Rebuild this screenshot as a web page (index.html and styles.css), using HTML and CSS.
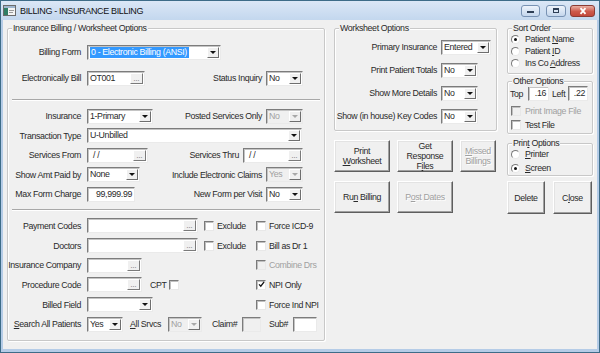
FILE: index.html
```html
<!DOCTYPE html>
<html lang="en">
<head>
    <meta charset="UTF-8">
    <title>BILLING - INSURANCE BILLING</title>
    <link rel="stylesheet" href="styles.css">
</head>
<body>
<div class="window">
    <!-- Title bar -->
    <div class="titlebar">
        <svg class="app-icon" viewBox="0 0 13 11">
            <rect x="0.5" y="0.5" width="12" height="10" fill="#f4f4f4" stroke="#6b6b6b"/>
            <rect x="1" y="1" width="11" height="2" fill="#9fb6cf"/>
            <rect x="1" y="3" width="4" height="7" fill="#2f7d64"/>
            <rect x="6" y="5" width="5" height="1" fill="#9a9a9a"/>
            <rect x="6" y="7" width="4" height="1" fill="#9a9a9a"/>
        </svg>
        <span class="title">BILLING - INSURANCE BILLING</span>
        <div class="win-btns">
            <span class="wb wb-min"><i></i></span>
            <span class="wb wb-max"><i></i></span>
            <span class="wb wb-close">
                <svg viewBox="0 0 10 8"><path d="M2.5 1.2l5 5.6M7.5 1.2l-5 5.6" stroke="#fff" stroke-width="1.8" fill="none"/></svg>
            </span>
        </div>
    </div>

    <div class="client">
        <!-- Insurance Billing / Worksheet Options -->
        <div class="group billing">
            <span class="legend">Insurance Billing / Worksheet Options</span>
            <div class="row">
                <span class="lbl">Billing Form</span>
                <div class="sel sel-form"><span class="val"><span class="hl">0 - Electronic Billing (ANSI)</span></span><i class="dd"></i></div>
            </div>
            <div class="row r-elec">
                <span class="lbl">Electronically Bill</span>
                <div class="tb tb-ebill"><span class="val">OT001</span><i class="el">...</i></div>
                <span class="rlbl">Status Inquiry</span>
                <div class="sel sel-yn"><span class="val">No</span><i class="dd"></i></div>
            </div>

            <div class="sep"></div>

            <div class="upper">
                <div class="row">
                    <span class="lbl">Insurance</span>
                    <div class="sel sel-mid"><span class="val">1-Primary</span><i class="dd"></i></div>
                    <span class="rlbl">Posted Services Only</span>
                    <div class="sel sel-yn off"><span class="val">No</span><i class="dd"></i></div>
                </div>
                <div class="row">
                    <span class="lbl">Transaction Type</span>
                    <div class="sel sel-trans"><span class="val">U-Unbilled</span><i class="dd"></i></div>
                </div>
                <div class="row">
                    <span class="lbl">Services From</span>
                    <div class="tb tb-from"><span class="val date">/ /</span><i class="el">...</i></div>
                    <span class="rlbl">Services Thru</span>
                    <div class="tb tb-thru"><span class="val date">/ /</span><i class="el">...</i></div>
                </div>
                <div class="row">
                    <span class="lbl">Show Amt Paid by</span>
                    <div class="sel sel-amt"><span class="val">None</span><i class="dd"></i></div>
                    <span class="rlbl">Include Electronic Claims</span>
                    <div class="sel sel-yn off"><span class="val">Yes</span><i class="dd"></i></div>
                </div>
                <div class="row">
                    <span class="lbl">Max Form Charge</span>
                    <div class="tb tb-max"><span class="val num">99,999.99</span></div>
                    <span class="rlbl">New Form per Visit</span>
                    <div class="sel sel-yn"><span class="val">No</span><i class="dd"></i></div>
                </div>
            </div>

            <div class="sep sep-low"></div>

            <div class="lower">
                <div class="row">
                    <span class="lbl">Payment Codes</span>
                    <div class="mid">
                        <div class="tb tb-codes"><span class="val"></span><i class="el">...</i></div>
                        <span class="cb cb-excl"></span><span class="cbl">Exclude</span>
                    </div>
                    <span class="cb"></span><span class="cbl">Force ICD-9</span>
                </div>
                <div class="row">
                    <span class="lbl">Doctors</span>
                    <div class="mid">
                        <div class="tb tb-codes"><span class="val"></span><i class="el">...</i></div>
                        <span class="cb cb-excl"></span><span class="cbl">Exclude</span>
                    </div>
                    <span class="cb"></span><span class="cbl">Bill as Dr 1</span>
                </div>
                <div class="row">
                    <span class="lbl lbl-wide">Insurance Company</span>
                    <div class="mid">
                        <div class="tb tb-short"><span class="val"></span><i class="el">...</i></div>
                    </div>
                    <span class="cb off"></span><span class="cbl off">Combine Drs</span>
                </div>
                <div class="row">
                    <span class="lbl">Procedure Code</span>
                    <div class="mid">
                        <div class="tb tb-short"><span class="val"></span><i class="el">...</i></div>
                        <span class="cpt">CPT</span><span class="cb"></span>
                    </div>
                    <span class="cb"><svg viewBox="0 0 8 8"><path d="M1.2 3.8l2 2.2 3.8-5" stroke="#111" stroke-width="1.5" fill="none"/></svg></span><span class="cbl">NPI Only</span>
                </div>
                <div class="row">
                    <span class="lbl">Billed Field</span>
                    <div class="mid">
                        <div class="sel sel-mid"><span class="val"></span><i class="dd"></i></div>
                    </div>
                    <span class="cb"></span><span class="cbl">Force Ind NPI</span>
                </div>
                <div class="row">
                    <span class="lbl lbl-wide"><u>S</u>earch All Patients</span>
                    <div class="sel sel-yes"><span class="val">Yes</span><i class="dd"></i></div>
                    <span class="txt t-all"><u>A</u>ll Srvcs</span>
                    <div class="sel sel-srv off"><span class="val">No</span><i class="dd"></i></div>
                    <span class="txt t-claim">Claim#</span>
                    <div class="tb tb-claim off"></div>
                    <span class="txt t-sub">Sub#</span>
                    <div class="tb tb-sub"></div>
                </div>
            </div>
        </div>

        <!-- Worksheet Options and actions -->
        <div class="col-mid">
            <div class="group ws">
                <span class="legend">Worksheet Options</span>
                <div class="row wrow">
                    <span class="wlbl">Primary Insurance</span>
                    <div class="sel sel-ent"><span class="val">Entered</span><i class="dd"></i></div>
                </div>
                <div class="row wrow">
                    <span class="wlbl">Print Patient Totals</span>
                    <div class="sel sel-yn"><span class="val">No</span><i class="dd"></i></div>
                </div>
                <div class="row wrow">
                    <span class="wlbl">Show More Details</span>
                    <div class="sel sel-yn"><span class="val">No</span><i class="dd"></i></div>
                </div>
                <div class="row wrow">
                    <span class="wlbl">Show (in house) Key Codes</span>
                    <div class="sel sel-yn"><span class="val">No</span><i class="dd"></i></div>
                </div>
            </div>
            <div class="btn-row">
                <div class="btn btn-big"><span>Print<br><u>W</u>orksheet</span></div>
                <div class="btn btn-big"><span>Get<br>Response<br>F<u>i</u>les</span></div>
                <div class="btn btn-small off"><span><u>M</u>issed<br>Billings</span></div>
            </div>
            <div class="btn-row">
                <div class="btn btn-big"><span>Ru<u>n</u> Billing</span></div>
                <div class="btn btn-big off"><span>P<u>o</u>st Dates</span></div>
            </div>
        </div>

        <!-- Sort / other / print options -->
        <div class="col-right">
            <div class="group sort">
                <span class="legend">Sort Order</span>
                <div class="opt"><span class="rb on"></span><span class="optl">Patient <u>N</u>ame</span></div>
                <div class="opt"><span class="rb"></span><span class="optl">Patient <u>I</u>D</span></div>
                <div class="opt"><span class="rb"></span><span class="optl">Ins Co <u>A</u>ddress</span></div>
            </div>
            <div class="group other">
                <span class="legend">Other Options</span>
                <div class="row margins">
                    <span class="txt t-top">Top</span>
                    <div class="tb tb-top"><span class="val num">.16</span></div>
                    <span class="txt t-left">Left</span>
                    <div class="tb tb-left"><span class="val num">.22</span></div>
                </div>
                <div class="opt opt-chk"><span class="cb off"></span><span class="optl off">Print Image File</span></div>
                <div class="opt opt-chk"><span class="cb"></span><span class="optl">Test File</span></div>
            </div>
            <div class="group print">
                <span class="legend">Prin<u>t</u> Options</span>
                <div class="opt opt-print"><span class="rb"></span><span class="optl"><u>P</u>rinter</span></div>
                <div class="opt opt-print"><span class="rb on"></span><span class="optl"><u>S</u>creen</span></div>
            </div>
            <div class="btn-row btn-row-right">
                <div class="btn btn-del"><span>Delete</span></div>
                <div class="btn btn-close"><span>C<u>l</u>ose</span></div>
            </div>
        </div>
    </div>
</div>
</body>
</html>
```

FILE: styles.css
```css
* {
    box-sizing: border-box;
}
body {
    margin: 0;
    font-family: "Liberation Sans", Arial, sans-serif;
    font-size: 8.8px;
    letter-spacing: -0.35px;
    color: #2a2a2a;
    background: #fff;
}

/* window frame */
.window {
    width: 600px;
    height: 353px;
    border: 1px solid #3e6c88;
    background: #b5cce7;
    display: flex;
    flex-direction: column;
}
.titlebar {
    height: 19px;
    display: flex;
    align-items: center;
    padding: 0 4px 0 2px;
    background: linear-gradient(#dbe7f6, #c3d7ee);
}
.app-icon {
    width: 13px;
    height: 11px;
    margin-right: 4px;
}
.title {
    font-size: 9px;
    color: #111;
}
.win-btns {
    margin-left: auto;
    display: flex;
    align-items: center;
}
.wb {
    height: 12px;
    border: 1px solid #7892b3;
    border-radius: 3px;
    background: linear-gradient(#eef4fb, #c4d6ec);
    display: flex;
    align-items: center;
    justify-content: center;
}
.wb-min {
    width: 19px;
}
.wb-min i {
    width: 7px;
    height: 2px;
    margin-top: 3px;
    background: #2d3e55;
}
.wb-max {
    width: 20px;
    margin-left: 6px;
}
.wb-max i {
    width: 6px;
    height: 5px;
    border: 1px solid #2d3e55;
    border-top-width: 2px;
}
.wb-close {
    width: 25px;
    margin-left: 4px;
    border-color: #8b3b34;
    background: linear-gradient(#eab0a4, #cd5a4c 55%, #c2483b);
}
.wb-close svg {
    width: 10px;
    height: 8px;
}

.client {
    flex: 1;
    margin: 0 2px 3px 2px;
    background: #f0f0f0;
    display: flex;
    align-items: flex-start;
    padding: 8px 0 0 4px;
}

/* group boxes */
.group {
    position: relative;
    border: 1px solid #c8c8c8;
    border-radius: 2px;
    box-shadow: inset 1px 1px 0 #fff, 1px 1px 0 #fff;
}
.legend {
    position: absolute;
    top: -7px;
    left: 4px;
    padding: 0 1px;
    background: #f0f0f0;
    line-height: 12px;
    white-space: nowrap;
}
.sep {
    margin: 11px 4px 0;
    border-top: 1px solid #a8a8a8;
    border-bottom: 1px solid #fff;
}
.sep-low {
    margin-top: 5px;
}

.row {
    display: flex;
    align-items: center;
    height: 20px;
    white-space: nowrap;
}
.lbl {
    flex: none;
    width: 73px;
    margin-right: 6px;
    text-align: right;
}
.lbl-wide {
    margin-left: -6px;
    width: 79px;
}
.rlbl {
    margin-left: auto;
    margin-right: 4px;
}

/* left group */
.billing {
    width: 318px;
    height: 313px;
    padding-top: 13px;
}
.billing .row {
    padding-right: 21px;
}
.r-elec {
    margin-top: 6px;
}
.upper {
    margin-top: 5.5px;
}
.upper .row {
    height: 19.5px;
}
.lower {
    margin-top: 5px;
}
.lower .row {
    height: 19.7px;
}
.mid {
    flex: none;
    width: 169px;
    display: flex;
    align-items: center;
}

/* combo boxes and text boxes */
.sel, .tb {
    flex: none;
    display: flex;
    height: 15px;
    background: #fff;
    border: 1px solid;
    border-color: #7c7c7c #eaeaea #eaeaea #7c7c7c;
    box-shadow: inset 1px 1px 0 #c4c4c4;
}
.val {
    flex: 1;
    padding-left: 2px;
    line-height: 13px;
    overflow: hidden;
    white-space: nowrap;
}
.val.num {
    text-align: right;
    padding-right: 2px;
}
.val.date {
    padding-left: 5px;
}
.hl {
    background: #3399ff;
    color: #fff;
    padding: 0 2px 0 1px;
    display: inline-block;
    line-height: 11px;
    margin-top: 1px;
}
.dd {
    flex: none;
    width: 12px;
    margin: 1px;
    background: #f0f0f0;
    border: 1px solid;
    border-color: #fff #6e6e6e #6e6e6e #fff;
    display: flex;
    align-items: center;
    justify-content: center;
}
.dd::after {
    content: "";
    border-left: 3px solid transparent;
    border-right: 3px solid transparent;
    border-top: 3px solid #111;
}
.el {
    flex: none;
    width: 13px;
    height: 11px;
    margin: 1px 1px 0 0;
    background: #f0f0f0;
    border: 1px solid;
    border-color: #fff #7a7a7a #7a7a7a #fff;
    font-style: normal;
    font-size: 7px;
    letter-spacing: 0;
    line-height: 10px;
    text-align: center;
    color: #555;
}
.sel.off, .tb.off {
    background: #f0f0f0;
    color: #a0a0a0;
}
.sel.off .dd::after {
    border-top-color: #a8a8a8;
}

.sel-form { width: 134px; }
.sel-yn { width: 37px; }
.sel-mid { width: 66px; }
.sel-trans { width: 215px; }
.sel-amt { width: 53px; }
.sel-yes { width: 36px; }
.sel-srv { width: 34px; }
.sel-ent { width: 50px; }
.tb-ebill { width: 58px; }
.tb-from { width: 61px; }
.tb-thru { width: 60px; }
.tb-max { width: 48px; }
.tb-codes { width: 111px; }
.tb-short { width: 55px; }
.tb-claim { width: 19px; }
.tb-sub { width: 24px; }
.tb-top { width: 21px; }
.tb-left { width: 20px; }

/* check boxes and radios */
.cb {
    flex: none;
    width: 10px;
    height: 10px;
    background: #fff;
    border: 1px solid;
    border-color: #7a7a7a #e8e8e8 #e8e8e8 #7a7a7a;
    box-shadow: inset 1px 1px 0 #c0c0c0;
    display: flex;
    align-items: center;
    justify-content: center;
}
.cb svg {
    width: 7px;
    height: 7px;
}
.cb.off {
    background: #f0f0f0;
}
.cb-excl {
    margin-left: 6px;
}
.cbl {
    margin-left: 3px;
}
.off {
    color: #a0a0a0;
}
.cpt {
    margin-left: 8px;
    width: 19px;
}
.rb {
    flex: none;
    width: 9px;
    height: 9px;
    border-radius: 50%;
    background: #fff;
    border: 1px solid;
    border-color: #7a7a7a #e8e8e8 #e8e8e8 #7a7a7a;
    display: flex;
    align-items: center;
    justify-content: center;
}
.rb.on::after {
    content: "";
    width: 3px;
    height: 3px;
    border-radius: 50%;
    background: #111;
}
.txt {
    flex: none;
}
.t-all { margin-left: 7px; width: 38px; }
.t-claim { margin-left: 10px; width: 30px; }
.t-sub { margin-left: 8px; width: 24px; }

/* middle column */
.col-mid {
    width: 163px;
    margin-left: 9px;
}
.ws {
    height: 103px;
    padding-top: 6.5px;
}
.wrow {
    height: 23px;
}
.wlbl {
    width: 102px;
    margin-right: 4px;
    text-align: right;
}

/* push buttons */
.btn-row {
    display: flex;
    gap: 7px;
    margin-top: 9px;
}
.btn {
    height: 32px;
    background: #f0f0f0;
    border: 1px solid;
    border-color: #fff #5e5e5e #5e5e5e #fff;
    box-shadow: inset -1px -1px 0 #a0a0a0, inset 1px 1px 0 #e3e3e3;
    display: flex;
    align-items: center;
    justify-content: center;
    text-align: center;
    line-height: 10px;
}
.btn.off {
    color: #a0a0a0;
    text-shadow: 1px 1px 0 #fff;
}
.btn-big { width: 56px; }
.btn-small { width: 36px; }

/* right column */
.col-right {
    width: 86px;
    margin-left: 10px;
}
.sort {
    height: 46px;
    padding: 4px 0 0 3px;
}
.opt {
    display: flex;
    align-items: center;
    height: 12px;
    white-space: nowrap;
}
.optl {
    margin-left: 5px;
}
.other {
    height: 53px;
    margin-top: 7px;
    padding: 4px 0 0 2px;
}
.margins {
    height: 15px;
    margin-bottom: 3px;
}
.t-top { width: 18px; }
.t-left { margin-left: 3px; width: 16px; }
.opt-chk {
    height: 14px;
    padding-left: 1px;
}
.opt-chk .optl {
    margin-left: 4px;
}
.print {
    height: 33px;
    margin-top: 9px;
    padding: 3px 0 0 3px;
}
.opt-print {
    height: 14px;
}
.btn-row-right {
    gap: 8px;
    margin-top: 5px;
}
.btn-del { width: 38px; height: 33px; }
.btn-close { width: 39px; height: 33px; }
```
